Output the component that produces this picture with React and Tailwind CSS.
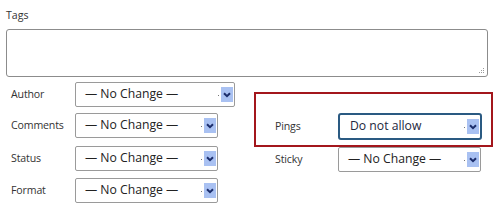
import React from "react";

const font = { fontFamily: '"Open Sans", "Noto Sans", sans-serif' };

function Arrow() {
  return (
    <div className="flex items-center">
      <span className="w-px h-px bg-[#777] mr-[2px] mt-[2px]" />
      <div className="w-[12px] h-[15px] bg-[#a9c1f2] flex items-center justify-center">
        <svg width="8" height="6" viewBox="0 0 8 6">
          <path d="M1 1.2 L4 4.2 L7 1.2" fill="none" stroke="#1b2d6b" strokeWidth="2" />
        </svg>
      </div>
    </div>
  );
}

function Select({ w, text, focus, h = "h-[25px]" }) {
  return (
    <div
      className={`${w} ${h} flex items-center justify-between bg-white ${
        focus
          ? "border-2 border-[#2a5a82] rounded-[3px] pl-[10px] pr-[1px] text-[#1d2740]"
          : "border border-[#9a9a9a] rounded-[2px] pl-[9px] pr-[1px] text-[#222]"
      } text-[12.2px]`}
    >
      <span className="leading-none">{text}</span>
      <Arrow />
    </div>
  );
}

function Row({ label, children, className = "", lw = "w-[64px]" }) {
  return (
    <div className={`flex items-center ${className}`}>
      <span className={`${lw} text-[10.6px] tracking-[-0.15px] text-[#333]`}>{label}</span>
      {children}
    </div>
  );
}

export default function App() {
  return (
    <div className="w-[500px] h-[207px] bg-white overflow-hidden" style={font}>
      <div className="pl-[6px] pt-[9px] text-[10.6px] leading-[13px] text-[#333]">Tags</div>
      <div className="ml-[6px] mt-[7px] w-[482px] h-[48px] border border-[#8c8c8c] rounded-[3px] flex items-end justify-end p-[2px]">
        <svg width="7" height="7" viewBox="0 0 7 7">
          <rect x="5" y="1" width="1" height="1" fill="#999" />
          <rect x="3" y="3" width="1" height="1" fill="#999" />
          <rect x="5" y="3" width="1" height="1" fill="#999" />
          <rect x="1" y="5" width="1" height="1" fill="#999" />
          <rect x="3" y="5" width="1" height="1" fill="#999" />
          <rect x="5" y="5" width="1" height="1" fill="#999" />
        </svg>
      </div>
      <div className="flex mt-[5px]">
        <div className="flex flex-col pl-[11px] w-[254px]">
          <Row label="Author">
            <Select w="w-[160px]" text="— No Change —" />
          </Row>
          <Row label="Comments" className="mt-[6px]">
            <Select w="w-[143px]" text="— No Change —" />
          </Row>
          <Row label="Status" className="mt-[8px]">
            <Select w="w-[143px]" text="— No Change —" />
          </Row>
          <Row label="Format" className="mt-[7px]">
            <Select w="w-[143px]" text="— No Change —" />
          </Row>
        </div>
        <div className="flex flex-col mt-[10px]">
          <div className="w-[239px] h-[55px] border-2 border-[#a3161c] pl-[19px] pt-[19px]">
            <Row label="Pings" lw="w-[63px]">
              <Select w="w-[144px]" h="h-[27px]" text="Do not allow" focus />
            </Row>
          </div>
          <Row label="Sticky" className="pl-[21px]" lw="w-[63px]">
            <Select w="w-[143px]" text="— No Change —" />
          </Row>
        </div>
      </div>
    </div>
  );
}
